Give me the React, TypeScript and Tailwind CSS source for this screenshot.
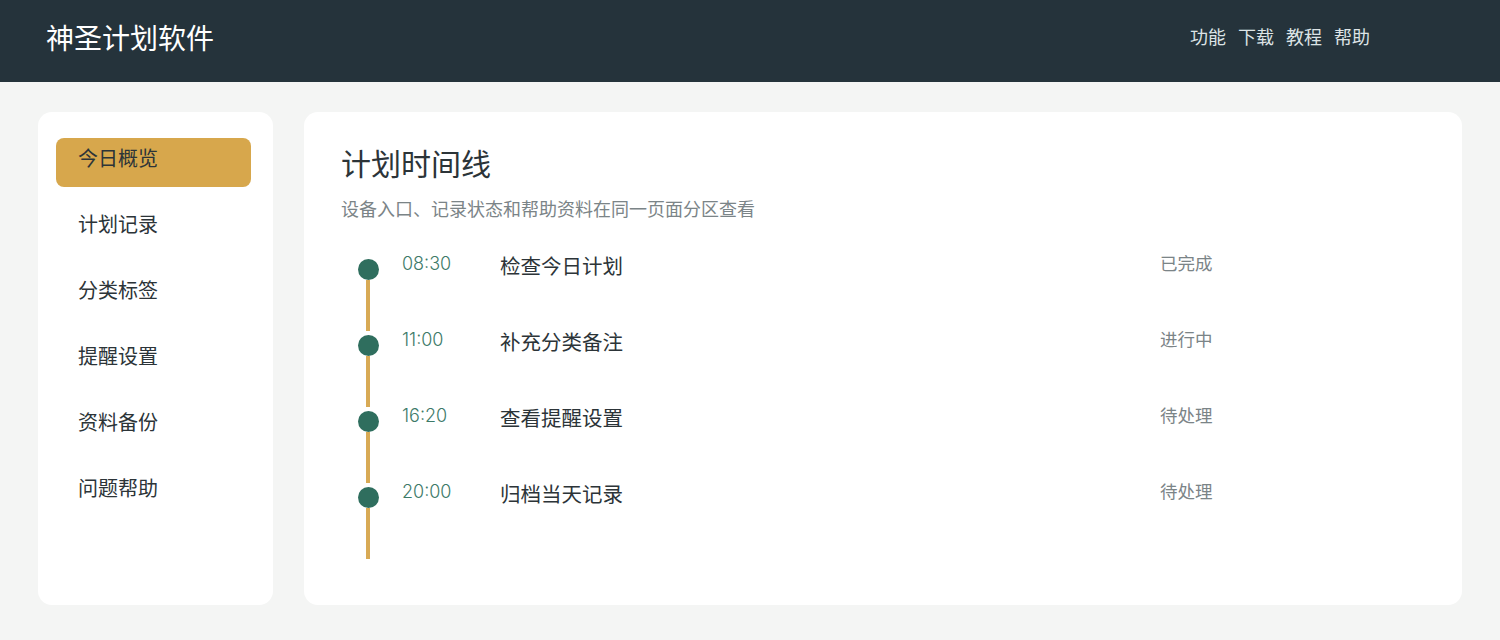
const navLinks = ["功能", "下载", "教程", "帮助"];

const menu = ["今日概览", "计划记录", "分类标签", "提醒设置", "资料备份", "问题帮助"];

const timeline = [
  { time: "08:30", title: "检查今日计划", status: "已完成" },
  { time: "11:00", title: "补充分类备注", status: "进行中" },
  { time: "16:20", title: "查看提醒设置", status: "待处理" },
  { time: "20:00", title: "归档当天记录", status: "待处理" },
];

export default function App() {
  return (
    <div className="min-h-[640px] bg-[#f4f5f4] font-['Noto_Sans_CJK_SC',sans-serif] text-[#2c3438]">
      <header className="flex h-[82px] items-center justify-between bg-[#25333b] pl-[46px] pr-[130px]">
        <h1 className="pb-[9px] text-[28px] leading-none text-white">神圣计划软件</h1>
        <nav className="flex gap-[12px] pb-[10px] text-[18px] leading-none text-[#dde4e6]">
          {navLinks.map((link) => (
            <a key={link} href="#">
              {link}
            </a>
          ))}
        </nav>
      </header>

      <main className="flex gap-[31px] px-[38px] pb-[35px] pt-[30px]">
        <aside className="h-[493px] w-[235px] shrink-0 rounded-[14px] bg-white pl-[18px] pr-[22px] pt-[26px]">
          <ul className="flex flex-col gap-[17px]">
            {menu.map((item, i) => (
              <li
                key={item}
                className={
                  i === 0
                    ? "h-[49px] rounded-[8px] bg-[#d7a74c] pl-[22px] pt-[5px] text-[20px] leading-[30px] text-[#2c3438]"
                    : "h-[49px] rounded-[8px] pl-[22px] pt-[5px] text-[20px] leading-[30px] text-[#2c3438]"
                }
              >
                {item}
              </li>
            ))}
          </ul>
        </aside>

        <section className="h-[493px] flex-1 rounded-[14px] bg-white px-[37px] pt-[30px]">
          <h2 className="text-[30px] leading-[40px] text-[#2c3438]">计划时间线</h2>
          <p className="mt-[13px] text-[18px] leading-[26px] text-[#7b8487]">
            设备入口、记录状态和帮助资料在同一页面分区查看
          </p>

          <ol className="mt-[38px] flex flex-col gap-[4px] pl-[16px]">
            {timeline.map((row) => (
              <li key={row.time} className="flex h-[72px]">
                <div className="flex w-[22px] flex-col items-center">
                  <span className="h-[21px] w-[21px] shrink-0 rounded-full bg-[#2f6e5e]" />
                  <span className="w-[4px] flex-1 bg-[#d8aa55]" />
                </div>
                <span className="-mt-[8px] ml-[23px] w-[98px] font-['Inter',sans-serif] text-[18px] font-light leading-[26px] text-[#3d7a68]">
                  {row.time}
                </span>
                <span className="-mt-[9px] w-[660px] text-[20.5px] leading-[30px] text-[#2c3438]">{row.title}</span>
                <span className="-mt-[9px] text-[17.5px] leading-[26px] text-[#7b8487]">{row.status}</span>
              </li>
            ))}
          </ol>
        </section>
      </main>
    </div>
  );
}
